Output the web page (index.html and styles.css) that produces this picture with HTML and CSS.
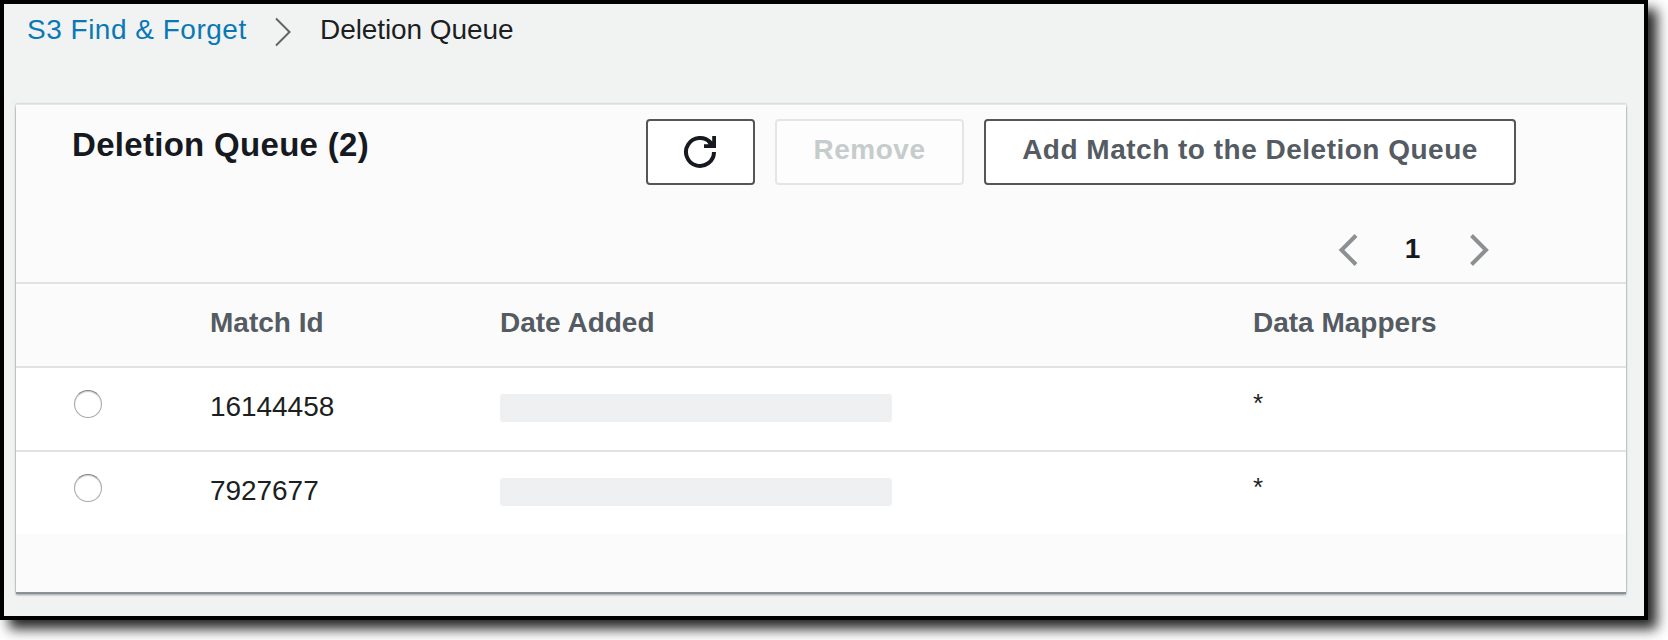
FILE: index.html
```html
<!DOCTYPE html>
<html lang="en">
<head>
<meta charset="utf-8">
<title>Deletion Queue</title>
<link rel="stylesheet" href="styles.css">
</head>
<body>
<div class="window">
  <nav class="breadcrumb">
    <a class="crumb-link" href="#">S3 Find &amp; Forget</a>
    <svg class="crumb-sep" width="18" height="30" viewBox="0 0 18 30"><path d="M2 1.5 15.5 15 2 28.5" fill="none" stroke="#5f6467" stroke-width="2"/></svg>
    <span class="crumb-current">Deletion Queue</span>
  </nav>
  <main class="card">
    <header class="card-head">
      <div class="toolbar">
        <h1 class="title">Deletion Queue (2)</h1>
        <button class="btn btn-icon" aria-label="Refresh">
          <svg width="34" height="34" viewBox="0 0 34 34"><path d="M31 17A14 14 0 1 1 27.5 7.7" fill="none" stroke="#16191f" stroke-width="4"/><path d="M29.2 1H33V13H21V9.2H25.5L24 7 27 4.6 29.2 6.6Z" fill="#16191f"/></svg>
        </button>
        <button class="btn btn-remove" disabled>Remove</button>
        <button class="btn btn-add">Add Match to the Deletion Queue</button>
      </div>
      <div class="pager">
        <svg width="20" height="32" viewBox="0 0 20 32"><path d="M18 1.5 3.5 16 18 30.5" fill="none" stroke="#8d9092" stroke-width="4"/></svg>
        <span class="page">1</span>
        <svg width="20" height="32" viewBox="0 0 20 32"><path d="M2.5 1.5 17 16 2.5 30.5" fill="none" stroke="#8d9092" stroke-width="4"/></svg>
      </div>
    </header>
    <div class="row row-head"><span></span><span>Match Id</span><span>Date Added</span><span>Data Mappers</span></div>
    <div class="row"><span class="radio"></span><span class="match-id">16144458</span><span class="redacted"></span><span class="mapper">*</span></div>
    <div class="row"><span class="radio"></span><span class="match-id">7927677</span><span class="redacted"></span><span class="mapper">*</span></div>
  </main>
</div>
</body>
</html>
```
FILE: styles.css
```css
* { box-sizing: border-box; }
body {
  margin: 0;
  height: 640px;
  overflow: hidden;
  background: #fff;
  color: #1c1f22;
  font: 28px/32px "Liberation Sans", Arial, sans-serif;
}
.window {
  width: 1648px;
  height: 620px;
  border: 4px solid #000;
  background: #f1f3f3;
  box-shadow: 9px 9px 12px rgba(0, 0, 0, .85);
}
.breadcrumb {
  display: flex;
  align-items: center;
  height: 100px;
  padding: 0 0 48px 23px;
}
.crumb-link { color: #0a78b5; text-decoration: none; width: 221px; white-space: nowrap; letter-spacing: .5px; }
.crumb-sep { margin: 4px 28px 0 26px; }
.crumb-current { letter-spacing: -.08px; }
.card {
  width: 1610px;
  height: 488px;
  margin-left: 12px;
  background: #fbfbfb;
  border-top: 1px solid #e3e7e7;
  box-shadow: 0 2px 0 #8b9297, 0 3px 2px rgba(20, 35, 45, .4), 0 0 2px rgba(0, 15, 25, .3);
}
.card-head { height: 179px; border-bottom: 2px solid #dfe3e4; }
.toolbar { display: flex; padding: 14px 110px 0 56px; }
.title {
  flex: 1;
  margin: 9px 0 0;
  font-size: 33px;
  line-height: 34px;
  letter-spacing: .3px;
  color: #16191f;
}
.btn {
  height: 66px;
  margin-left: 20px;
  padding: 0 0 5px;
  border: 2px solid #545658;
  border-radius: 4px;
  background: #fff;
  color: #545b62;
  font: bold 28px/32px "Liberation Sans", Arial, sans-serif;
  letter-spacing: .5px;
}
.btn-icon { width: 109px; padding: 0 2px 0 0; }
.btn-icon svg { display: block; margin: 0 auto; }
.btn-remove { width: 189px; border-color: #e2e6e6; background: #fdfdfd; color: #c6cccc; }
.btn-add { width: 532px; }
.pager {
  display: flex;
  align-items: center;
  justify-content: flex-end;
  padding: 49px 137px 0 0;
}
.page { width: 111px; text-align: center; font-weight: bold; color: #16191f; margin-top: -3px; padding-right: 2px; }
.row {
  display: grid;
  grid-template-columns: 138px 290px 753px 1fr;
  align-items: center;
  height: 84px;
  padding: 0 0 2px 56px;
  background: #fff;
}
.row + .row { border-top: 2px solid #dfe3e4; }
.row-head { background: #fbfbfb; height: 82px; padding-bottom: 4px; color: #545b62; font-weight: bold; }
.radio {
  width: 28px;
  height: 28px;
  margin: -8px 0 0 2px;
  border: 1px solid #a9a9a9;
  border-top-color: #858585;
  border-radius: 50%;
  box-shadow: inset 0 1px 1px #ccc;
}
.match-id { margin-top: -3px; letter-spacing: -.05px; }
.redacted { width: 392px; height: 28px; border-radius: 3px; background: #eff0f1; }
.mapper { margin-top: -10px; font-size: 26px; }
```
